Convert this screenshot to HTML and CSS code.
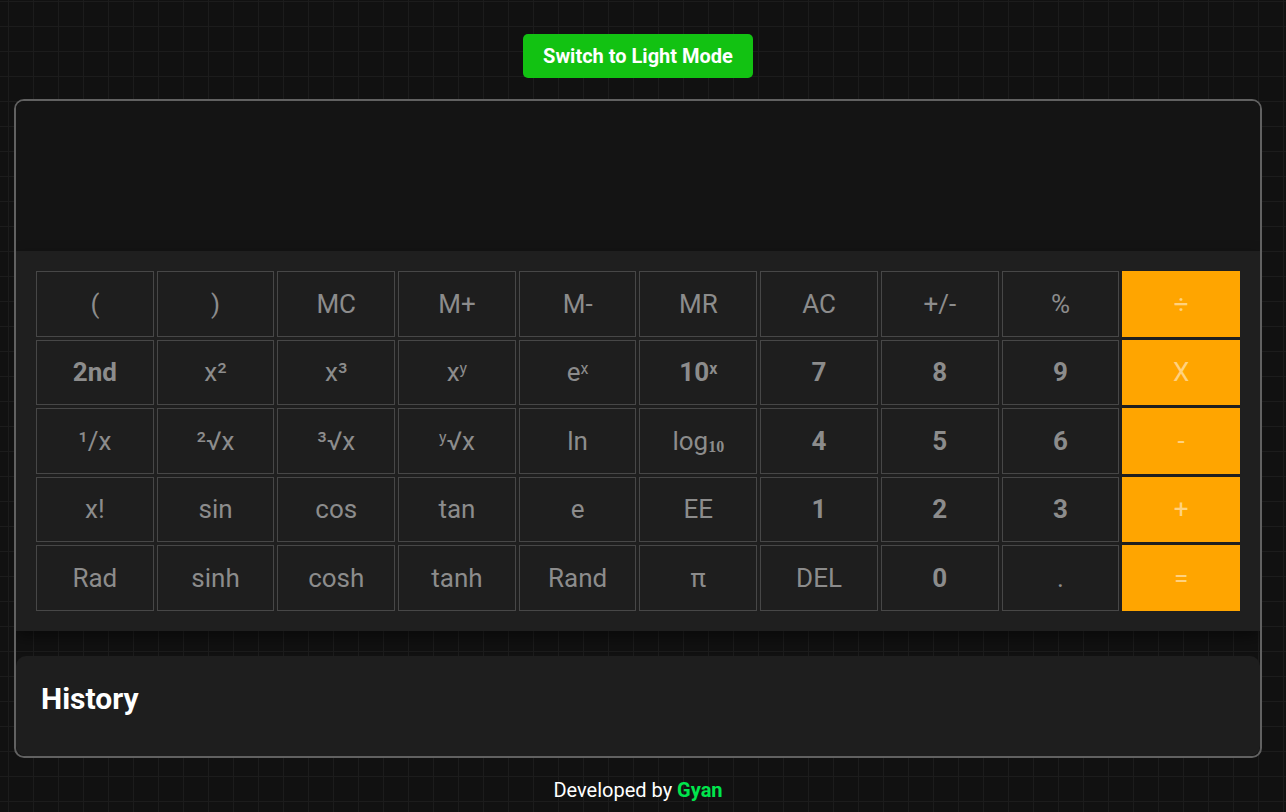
FILE: index.html
```html
<!DOCTYPE html>
<html>
<head>
<meta charset="utf-8">
<link rel="stylesheet" href="styles.css">
</head>
<body>
<div class="page">
  <div class="top">
    <button class="mode-btn">Switch to Light Mode</button>
  </div>
  <div class="calc">
    <div class="display"></div>
    <div class="keypad">
      <button class="key">(</button>
      <button class="key">)</button>
      <button class="key">MC</button>
      <button class="key">M+</button>
      <button class="key">M-</button>
      <button class="key">MR</button>
      <button class="key">AC</button>
      <button class="key">+/-</button>
      <button class="key">%</button>
      <button class="key op">÷</button>

      <button class="key bold">2nd</button>
      <button class="key">x²</button>
      <button class="key">x³</button>
      <button class="key">x<sup>y</sup></button>
      <button class="key">e<sup>x</sup></button>
      <button class="key bold">10<sup>x</sup></button>
      <button class="key bold">7</button>
      <button class="key bold">8</button>
      <button class="key bold">9</button>
      <button class="key op">X</button>

      <button class="key">¹/x</button>
      <button class="key">²√x</button>
      <button class="key">³√x</button>
      <button class="key"><sup>y</sup>√x</button>
      <button class="key">ln</button>
      <button class="key">log<sub>10</sub></button>
      <button class="key bold">4</button>
      <button class="key bold">5</button>
      <button class="key bold">6</button>
      <button class="key op">-</button>

      <button class="key">x!</button>
      <button class="key">sin</button>
      <button class="key">cos</button>
      <button class="key">tan</button>
      <button class="key">e</button>
      <button class="key">EE</button>
      <button class="key bold">1</button>
      <button class="key bold">2</button>
      <button class="key bold">3</button>
      <button class="key op">+</button>

      <button class="key">Rad</button>
      <button class="key">sinh</button>
      <button class="key">cosh</button>
      <button class="key">tanh</button>
      <button class="key">Rand</button>
      <button class="key">π</button>
      <button class="key">DEL</button>
      <button class="key bold">0</button>
      <button class="key">.</button>
      <button class="key op">=</button>
    </div>
    <div class="history">
      <h2 class="history-title">History</h2>
    </div>
  </div>
  <footer class="footer">Developed by <span class="author">Gyan</span></footer>
</div>
</body>
</html>
```

FILE: styles.css
```css
html, body {
  margin: 0;
  padding: 0;
}
body {
  background-color: #111111;
  background-image:
    linear-gradient(to right, #1c1c1c 1px, transparent 1px),
    linear-gradient(to bottom, #1c1c1c 1px, transparent 1px);
  background-size: 25px 25px;
  background-position: 8px 1px;
  font-family: Roboto, "Liberation Sans", sans-serif;
  min-height: 812px;
}
.page {
  width: 1276px;
}
.top {
  display: flex;
  justify-content: center;
  padding-top: 34px;
  padding-bottom: 21px;
}
.mode-btn {
  width: 230px;
  height: 44px;
  background: #12c212;
  color: #ffffff;
  border: none;
  border-radius: 5px;
  font-family: Roboto, "Liberation Sans", sans-serif;
  font-weight: 700;
  font-size: 20px;
  padding: 0;
}
.calc {
  margin: 0 14px;
  border: 2px solid #616161;
  border-radius: 10px;
  overflow: hidden;
}
.display {
  height: 150px;
  background: #141414;
}
.keypad {
  background: #1f1f1f;
  padding: 20px;
  display: grid;
  grid-template-columns: repeat(10, 1fr);
  grid-auto-rows: 65.5px;
  gap: 3px;
  box-shadow: 0 6px 14px rgba(0, 0, 0, 0.45);
  position: relative;
}
.key {
  background: #1e1e1e;
  border: 1px solid #474747;
  color: #8c8c8c;
  font-family: Roboto, "Liberation Sans", sans-serif;
  font-size: 26px;
  font-weight: 400;
  padding: 0;
  margin: 0;
}
.key.bold {
  font-weight: 700;
}
.key sup {
  font-size: 16px;
  vertical-align: 7px;
  line-height: 0;
}
.key sub {
  font-family: "Liberation Serif", serif;
  font-size: 16px;
  font-weight: 700;
  vertical-align: -2px;
  line-height: 0;
}
.key.op {
  background: #ffa500;
  border-color: #ffa500;
  color: rgba(255, 255, 255, 0.5);
}
.history {
  margin-top: 25px;
  background: #1e1e1e;
  border-radius: 10px;
  height: 100px;
  padding: 0 25px;
  box-sizing: border-box;
}
.history-title {
  margin: 0;
  padding-top: 25px;
  color: #ffffff;
  font-size: 30px;
  font-weight: 700;
}
.footer {
  text-align: center;
  color: #ffffff;
  font-size: 20px;
  margin-top: 20px;
}
.author {
  color: #00e64d;
  font-weight: 700;
}
```
